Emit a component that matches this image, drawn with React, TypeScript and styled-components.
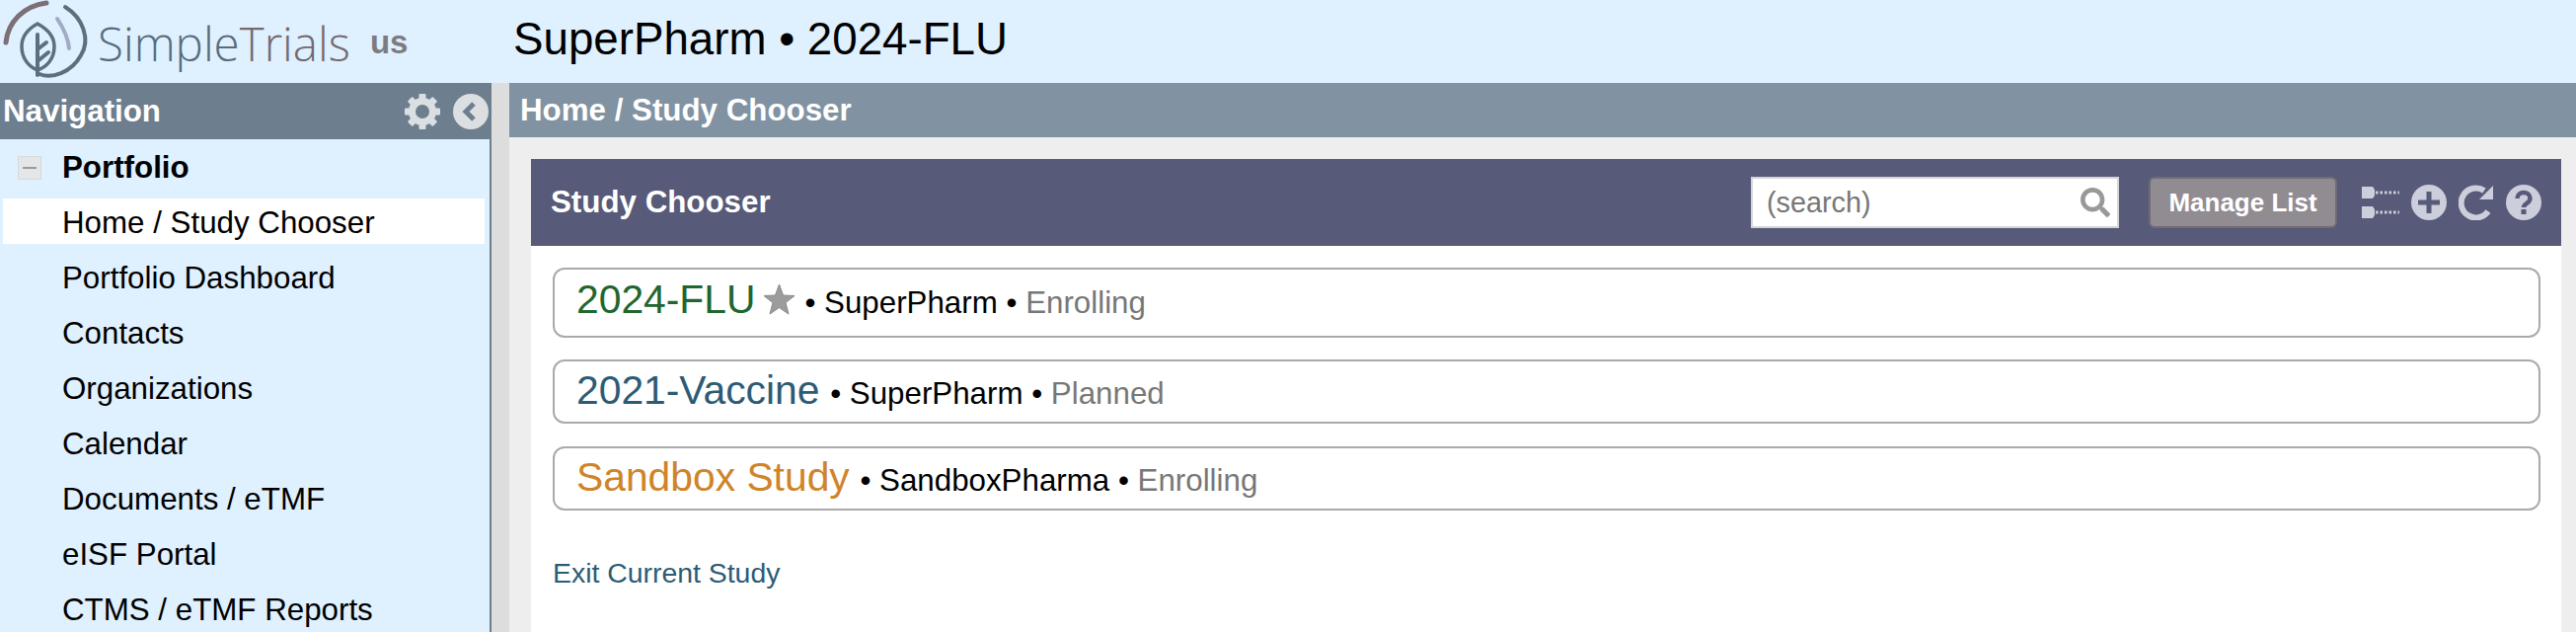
import { createGlobalStyle, styled } from "styled-components";
import { FaSearch } from "react-icons/fa";

const GlobalStyle = createGlobalStyle`
  html, body {
    margin: 0;
    padding: 0;
    height: 640px;
    overflow: hidden;
    background: #eeeeee;
    font-family: "Liberation Sans", Arial, sans-serif;
  }
`;

const Page = styled.div`
  width: 2610px;
  height: 640px;
  display: flex;
  flex-direction: column;
  overflow: hidden;
`;

const TopBar = styled.header`
  height: 84px;
  flex: none;
  background: #dff0ff;
  display: flex;
  align-items: center;
`;

const Brand = styled.div`
  width: 520px;
  flex: none;
  display: flex;
  align-items: center;
`;

const BrandName = styled.span`
  font-family: "Open Sans", sans-serif;
  font-size: 47.5px;
  font-weight: 300;
  color: #566c7c;
  margin-left: 3px;
  margin-top: 2px;
`;

const BrandAccent = styled.span`
  color: #75686f;
`;

const Region = styled.span`
  font-size: 33px;
  font-weight: bold;
  color: #7d7a80;
  margin-left: 20px;
  margin-top: 2px;
`;

const StudyTitle = styled.h1`
  margin: 0;
  font-size: 45.7px;
  font-weight: normal;
  color: #000;
  margin-top: -4px;
`;

const Body = styled.div`
  flex: 1;
  display: flex;
  min-height: 0;
`;

const Sidebar = styled.nav`
  width: 498px;
  flex: none;
  background: #dff0ff;
  border-right: 2px solid #6d7e8e;
  box-sizing: border-box;
`;

const SideHeader = styled.div`
  height: 57px;
  margin-right: -2px;
  background: #6d7e8e;
  display: flex;
  align-items: center;
  padding: 0 3px 0 3px;
  gap: 13px;
`;

const SideTitle = styled.span`
  flex: 1;
  font-size: 31.3px;
  font-weight: bold;
  color: #fff;
`;

const NavList = styled.ul`
  list-style: none;
  margin: 0;
  padding: 4px 5px 0 3px;
  display: flex;
  flex-direction: column;
  gap: 10px;
`;

const NavRow = styled.li<{ $active?: boolean; $group?: boolean }>`
  height: 46px;
  flex: none;
  box-sizing: border-box;
  padding: 3px 0 0 ${(p) => (p.$group ? "0" : "60px")};
  display: flex;
  align-items: center;
  font-size: 31.3px;
  font-weight: ${(p) => (p.$group ? "bold" : "normal")};
  color: #000;
  background: ${(p) => (p.$active ? "#fff" : "transparent")};
`;

const Collapse = styled.span`
  width: 24px;
  height: 24px;
  margin: 0 21px 0 15px;
  background: #e4e6e8;
  border: 1px solid #d6dadd;
  box-sizing: border-box;
  display: flex;
  align-items: center;
  justify-content: center;

  &::before {
    content: "";
    width: 14px;
    height: 2px;
    background: #9a9a9a;
  }
`;

const Gutter = styled.div`
  width: 18px;
  flex: none;
  background: #dddddd;
`;

const Main = styled.main`
  flex: 1;
  min-width: 0;
  display: flex;
  flex-direction: column;
`;

const MainHeader = styled.div`
  height: 55px;
  flex: none;
  background: #8192a2;
  color: #fff;
  font-size: 31.3px;
  font-weight: bold;
  display: flex;
  align-items: center;
  padding-left: 11px;
`;

const Content = styled.div`
  flex: 1;
  padding: 22px 15px 0 22px;
  background: #eeeeee;
`;

const Panel = styled.section`
  background: #fff;
  height: 100%;
`;

const PanelHeader = styled.div`
  height: 88px;
  background: #575a78;
  display: flex;
  align-items: center;
  padding: 0 20px;
`;

const PanelTitle = styled.h2`
  flex: 1;
  margin: 0;
  font-size: 31.3px;
  font-weight: bold;
  color: #fff;
`;

const SearchBox = styled.div`
  width: 373px;
  height: 52px;
  box-sizing: border-box;
  background: #fff;
  border: 2px solid #d5d5d8;
  display: flex;
  align-items: center;
  justify-content: space-between;
  padding: 0 7px 0 14px;
  font-size: 28.8px;
  color: #777;
`;

const ManageButton = styled.button`
  width: 191px;
  height: 52px;
  margin-left: 30px;
  background: #918b92;
  border: 2px solid #6f6c78;
  border-radius: 6px;
  color: #fff;
  font-family: inherit;
  font-size: 26px;
  font-weight: bold;
  padding: 0;
`;

const Tools = styled.div`
  display: flex;
  align-items: center;
  gap: 12px;
  margin-left: 25px;
`;

const StudyList = styled.div`
  padding: 22px 21px 0 22px;
  display: flex;
  flex-direction: column;
`;

const StudyRow = styled.div<{ $height: number; $gap: number; $top: number }>`
  height: ${(p) => p.$height}px;
  margin-bottom: ${(p) => p.$gap}px;
  box-sizing: border-box;
  border: 2px solid #aaaaaa;
  border-radius: 12px;
  display: flex;
  align-items: baseline;
  padding: ${(p) => p.$top}px 0 0 22px;
  font-size: 31.3px;
  color: #000;
  white-space: pre;
`;

const StudyName = styled.span<{ $color: string }>`
  font-size: 40.8px;
  margin-right: 2px;
  color: ${(p) => p.$color};
`;

const StudyState = styled.span`
  color: #777;
`;

const StarMark = styled.svg`
  width: 33px;
  height: 32px;
  margin: 7px 9px 0 6px;
  align-self: flex-start;
`;

const ExitLink = styled.a`
  display: block;
  margin: 47px 0 0 22px;
  font-size: 28.4px;
  color: #2d5b75;
`;

function Logo() {
  return (
    <svg width="96" height="84" viewBox="0 0 96 84" fill="none" strokeLinecap="round" style={{ flex: "none" }}>
      <path d="M6 43 C8 22 24 6 47 3" stroke="#7d6f77" strokeWidth="5" />
      <path d="M66 7 C84 18 92 40 82 56 C72 74 52 80 40 75" stroke="#5a7080" strokeWidth="4" />
      <path d="M58 19 C64 28 69 38 70 49" stroke="#a0abc4" strokeWidth="4" />
      <path d="M38 24 C27 30 22 38 22 47 C22 60 30 68 38 71 C47 68 55 60 55 47 C55 38 49 30 38 24 Z" stroke="#5a7080" strokeWidth="3.5" />
      <path d="M38 35 L38 76 M38 50 L47 43 M38 62 L49 53" stroke="#5a7080" strokeWidth="4" />
    </svg>
  );
}

function CogIcon() {
  const teeth = [0, 45, 90, 135, 180, 225, 270, 315];
  return (
    <svg width="36" height="36" viewBox="0 0 36 36" style={{ flex: "none" }}>
      {teeth.map((a) => (
        <rect key={a} x="14.5" y="0" width="7" height="8" rx="1" fill="#dcdfe2" transform={`rotate(${a} 18 18)`} />
      ))}
      <circle cx="18" cy="18" r="10.5" fill="none" stroke="#dcdfe2" strokeWidth="7" />
    </svg>
  );
}

function BackIcon() {
  return (
    <svg width="36" height="36" viewBox="0 0 36 36" style={{ flex: "none" }}>
      <circle cx="18" cy="18" r="18" fill="#dcdfe2" />
      <path d="M21 10 L13 18 L21 26" fill="none" stroke="#6d7e8e" strokeWidth="5" />
    </svg>
  );
}

function TreeIcon() {
  return (
    <svg width="38" height="36" viewBox="0 0 38 36" style={{ flex: "none" }}>
      <path d="M0 2 H11 L13 5 V11 L11 14 H0 Z" fill="#cdcedb" />
      <path d="M0 22 H11 L13 25 V31 L11 34 H0 Z" fill="#cdcedb" />
      <path d="M14 8 H38 M14 28 H38" stroke="#cdcedb" strokeWidth="3" strokeDasharray="2.5 2" />
    </svg>
  );
}

function PlusIcon() {
  return (
    <svg width="36" height="36" viewBox="0 0 36 36" style={{ flex: "none" }}>
      <circle cx="18" cy="18" r="18" fill="#cdcedb" />
      <path d="M18 7 V29 M7 18 H29" stroke="#575a78" strokeWidth="5" />
    </svg>
  );
}

function RefreshIcon() {
  return (
    <svg width="36" height="36" viewBox="0 0 36 36" style={{ flex: "none" }}>
      <path d="M30 27 A15 15 0 1 1 26 6" fill="none" stroke="#cdcedb" strokeWidth="6" />
      <path d="M35 1 V15 H21 Z" fill="#cdcedb" />
    </svg>
  );
}

function HelpIcon() {
  return (
    <svg width="36" height="36" viewBox="0 0 36 36" style={{ flex: "none" }}>
      <circle cx="18" cy="18" r="18" fill="#cdcedb" />
      <path d="M11.5 14 C11.5 6 24.5 6 24.5 14 C24.5 19 18 18.5 18 23" fill="none" stroke="#575a78" strokeWidth="4.5" />
      <rect x="15.5" y="25" width="5" height="5" fill="#575a78" />
    </svg>
  );
}

const navItems = [
  "Portfolio Dashboard",
  "Contacts",
  "Organizations",
  "Calendar",
  "Documents / eTMF",
  "eISF Portal",
  "CTMS / eTMF Reports",
];

function App() {
  return (
    <Page>
      <GlobalStyle />
      <TopBar>
        <Brand>
          <Logo />
          <BrandName>
            Simple<BrandAccent>Trials</BrandAccent>
          </BrandName>
          <Region>us</Region>
        </Brand>
        <StudyTitle>SuperPharm • 2024-FLU</StudyTitle>
      </TopBar>
      <Body>
        <Sidebar>
          <SideHeader>
            <SideTitle>Navigation</SideTitle>
            <CogIcon />
            <BackIcon />
          </SideHeader>
          <NavList>
            <NavRow $group>
              <Collapse />
              Portfolio
            </NavRow>
            <NavRow $active>Home / Study Chooser</NavRow>
            {navItems.map((item) => (
              <NavRow key={item}>{item}</NavRow>
            ))}
          </NavList>
        </Sidebar>
        <Gutter />
        <Main>
          <MainHeader>Home / Study Chooser</MainHeader>
          <Content>
            <Panel>
              <PanelHeader>
                <PanelTitle>Study Chooser</PanelTitle>
                <SearchBox>
                  (search)
                  <FaSearch size={30} color="#999" />
                </SearchBox>
                <ManageButton>Manage List</ManageButton>
                <Tools>
                  <TreeIcon />
                  <PlusIcon />
                  <RefreshIcon />
                  <HelpIcon />
                </Tools>
              </PanelHeader>
              <StudyList>
                <StudyRow $height={71} $gap={22} $top={7}>
                  <StudyName $color="#21652f">2024-FLU</StudyName>
                  <StarMark viewBox="0 0 33 32">
                    <path
                      d="M16.5 1 L20.5 12 L32 12.5 L23 19.5 L26 31 L16.5 24.5 L7 31 L10 19.5 L1 12.5 L12.5 12 Z"
                      fill="#9c9c9c"
                      stroke="#8a8a8a"
                    />
                  </StarMark>
                  {"• SuperPharm • "}
                  <StudyState>Enrolling</StudyState>
                </StudyRow>
                <StudyRow $height={65} $gap={23} $top={6}>
                  <StudyName $color="#2d5b75">2021-Vaccine</StudyName>
                  {" • SuperPharm • "}
                  <StudyState>Planned</StudyState>
                </StudyRow>
                <StudyRow $height={65} $gap={0} $top={6}>
                  <StudyName $color="#cf8429">Sandbox Study</StudyName>
                  {" • SandboxPharma • "}
                  <StudyState>Enrolling</StudyState>
                </StudyRow>
              </StudyList>
              <ExitLink>Exit Current Study</ExitLink>
            </Panel>
          </Content>
        </Main>
      </Body>
    </Page>
  );
}

export default App;
